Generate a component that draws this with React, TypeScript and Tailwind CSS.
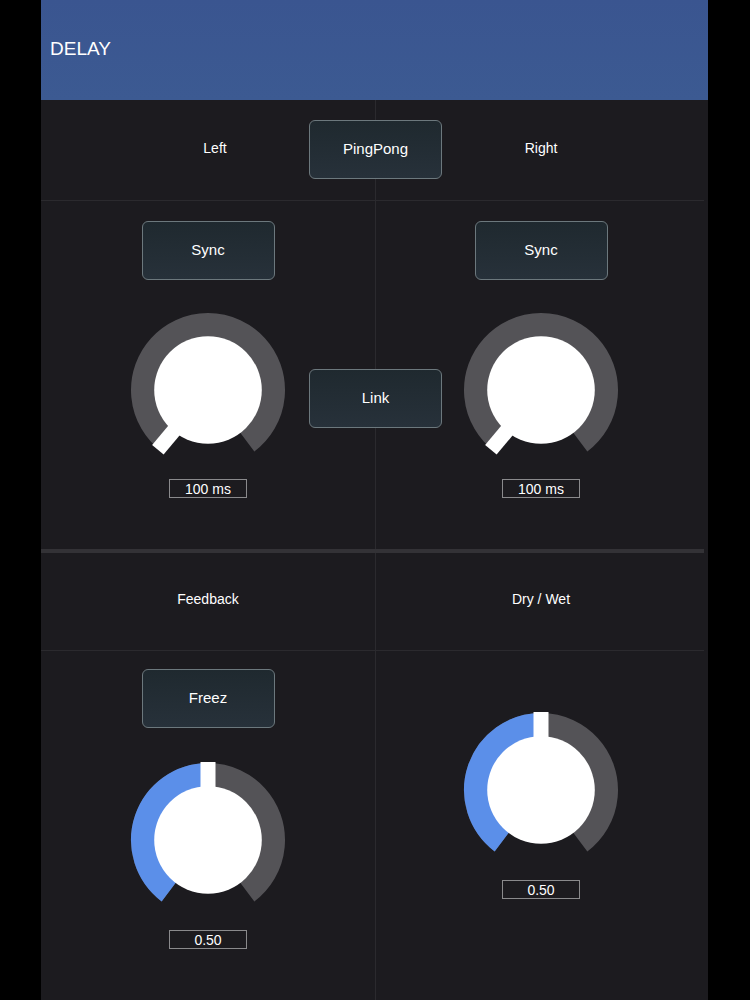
import React from "react";

const SWEEP = 143;

const polar = (r: number, deg: number) => {
  const a = (deg * Math.PI) / 180;
  return [80 + r * Math.sin(a), 80 - r * Math.cos(a)];
};

const arc = (r: number, from: number, to: number) => {
  const [x0, y0] = polar(r, from);
  const [x1, y1] = polar(r, to);
  const large = to - from > 180 ? 1 : 0;
  return `M ${x0} ${y0} A ${r} ${r} 0 ${large} 1 ${x1} ${y1}`;
};

interface KnobProps {
  value: number;
  fill?: boolean;
  pointer?: number;
}

const Knob: React.FC<KnobProps> = ({ value, fill = false, pointer }) => {
  const angle = pointer ?? -SWEEP + value * SWEEP * 2;
  return (
    <svg width="160" height="160" viewBox="0 0 160 160">
      <path d={arc(65, -SWEEP, SWEEP)} fill="none" stroke="#545357" strokeWidth="24" />
      {fill && angle > -SWEEP && (
        <path d={arc(65, -SWEEP, angle)} fill="none" stroke="#5b8fe9" strokeWidth="24" />
      )}
      <rect x="72.5" y="2" width="15" height="45" fill="#ffffff" transform={`rotate(${angle} 80 80)`} />
      <circle cx="80" cy="80" r="53.8" fill="#ffffff" />
    </svg>
  );
};

const Button: React.FC<{ label: string; className?: string }> = ({ label, className = "" }) => (
  <div
    className={`w-[133px] h-[59px] rounded-[6px] border border-[#6c787d] bg-gradient-to-b from-[#1f292f] to-[#27313a] flex items-center justify-center text-[15px] text-white ${className}`}
  >
    {label}
  </div>
);

const ValueBox: React.FC<{ text: string }> = ({ text }) => (
  <div className="w-[78px] h-[19px] border border-[#8a8a8c] flex items-center justify-center text-[14px] text-white leading-none">
    {text}
  </div>
);

export default function App() {
  return (
    <div
      className="flex w-[750px] h-[1000px] bg-black pl-[41px]"
      style={{ fontFamily: '"Liberation Sans", Arial, sans-serif' }}
    >
      <div className="w-[667px] h-full flex flex-col bg-[#1c1b1f]">
        <header className="h-[100px] shrink-0 bg-gradient-to-b from-[#3a5590] to-[#3c5a92] flex items-center pl-[9px] pb-[2px] text-[19px] text-white">
          DELAY
        </header>

        {/* channel row */}
        <div className="relative grid grid-cols-[335px_332px] h-[100px] shrink-0">
          <div className="border-r border-[#2b2a2e] flex items-center justify-center pl-[14px] pb-[4px] text-[14px] text-white">
            Left
          </div>
          <div className="flex items-center justify-center pr-[2px] pb-[4px] text-[14px] text-white">Right</div>
          <Button label="PingPong" className="absolute left-[268px] top-[20px]" />
        </div>
        <div className="h-px shrink-0 bg-[#2b2a2e] mr-[4px]" />

        {/* time row */}
        <div className="relative grid grid-cols-[335px_332px] h-[348px] shrink-0">
          <div className="border-r border-[#2b2a2e] flex flex-col items-center pt-[20px]">
            <Button label="Sync" />
            <div className="mt-[30px]">
              <Knob value={0} pointer={-140} />
            </div>
            <div className="mt-[9px]">
              <ValueBox text="100 ms" />
            </div>
          </div>
          <div className="flex flex-col items-center pt-[20px] pr-[2px]">
            <Button label="Sync" />
            <div className="mt-[30px]">
              <Knob value={0} pointer={-140} />
            </div>
            <div className="mt-[9px]">
              <ValueBox text="100 ms" />
            </div>
          </div>
          <Button label="Link" className="absolute left-[268px] top-[168px]" />
        </div>
        <div className="h-[4px] shrink-0 bg-[#333236] mr-[4px]" />

        {/* mix labels */}
        <div className="grid grid-cols-[335px_332px] h-[97px] shrink-0">
          <div className="border-r border-[#2b2a2e] flex items-center justify-center pb-[4px] text-[14px] text-white">
            Feedback
          </div>
          <div className="flex items-center justify-center pr-[2px] pb-[4px] text-[14px] text-white">Dry / Wet</div>
        </div>
        <div className="h-px shrink-0 bg-[#2b2a2e] mr-[4px]" />

        {/* mix knobs */}
        <div className="grid grid-cols-[335px_332px] flex-1">
          <div className="border-r border-[#2b2a2e] flex flex-col items-center pt-[18px]">
            <Button label="Freez" />
            <div className="mt-[32px]">
              <Knob value={0.5} fill />
            </div>
            <div className="mt-[10px]">
              <ValueBox text="0.50" />
            </div>
          </div>
          <div className="flex flex-col items-center pt-[59px] pr-[2px]">
            <Knob value={0.5} fill />
            <div className="mt-[10px]">
              <ValueBox text="0.50" />
            </div>
          </div>
        </div>
      </div>
    </div>
  );
}
